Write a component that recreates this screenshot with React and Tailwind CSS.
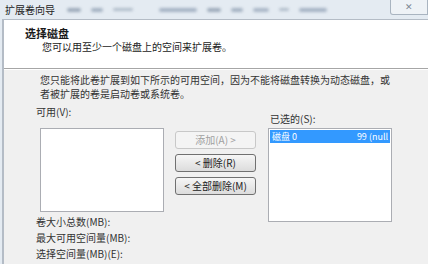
import React from "react";

const font = { fontFamily: '"Noto Sans CJK SC", "Noto Sans", sans-serif' };

function Btn({ children, disabled }) {
  return (
    <button
      className={`w-[81px] h-[18px] rounded-[3px] border text-[10px] leading-none flex items-center justify-center ${
        disabled
          ? "border-[#c8c8c8] bg-[#f4f4f4] text-[#a0a0a0]"
          : "border-[#707070] bg-gradient-to-b from-[#f6f6f6] to-[#dcdcdc] text-[#222]"
      }`}
    >
      {children}
    </button>
  );
}

export default function App() {
  return (
    <div className="w-[428px] h-[264px] overflow-hidden bg-[#e4ebf2] text-[#1a1a1a]" style={font}>
      {/* title bar */}
      <div className="h-[19px] flex items-center relative">
        <span className="pl-[5px] text-[10px] text-[#222]">扩展卷向导</span>
        <div className="flex items-center gap-[10px] ml-[12px] blur-[1.5px] opacity-70">
          <div className="w-[14px] h-[4px] bg-[#7f8fa3] rounded" />
          <div className="w-[12px] h-[4px] bg-[#8899ad] rounded" />
          <div className="w-[20px] h-[3px] bg-[#9aa8b8] rounded" />
          <div className="w-[38px] h-[4px] bg-[#8a9ab0] rounded ml-[16px]" />
          <div className="w-[14px] h-[4px] bg-[#7f8fa3] rounded" />
          <div className="w-[12px] h-[4px] bg-[#8899ad] rounded" />
          <div className="w-[16px] h-[4px] bg-[#90a0b4] rounded" />
          <div className="w-[10px] h-[3px] bg-[#9aa8b8] rounded" />
          <div className="w-[28px] h-[4px] bg-[#8a9ab0] rounded" />
        </div>
        <div className="absolute right-[0px] top-0 w-[38px] h-[15px] border border-[#a9b4c0] border-t-0 rounded-bl-[3px] bg-[#eef2f6] flex items-center justify-center text-[9px] text-[#7c8794]">
          ✕
        </div>
      </div>

      {/* window */}
      <div className="ml-[2px] border-l-2 border-t border-[#b4bcc6] h-[245px] flex flex-col">
        <div className="h-[49px] shrink-0 bg-white border-b border-[#a6a6a6] pl-[21px] pt-[6px]">
          <div className="text-[11px] font-bold leading-[14px]">选择磁盘</div>
          <div className="pl-[17px] text-[10px] leading-[13px] text-[#222]">您可以用至少一个磁盘上的空间来扩展卷。</div>
        </div>

        <div className="flex-1 bg-[#f0f0f0] border-t border-white pl-[32px] pt-[3px]">
          <div className="pl-[4px] text-[10px] leading-[14px] text-[#333] whitespace-nowrap">
            <div>您只能将此卷扩展到如下所示的可用空间，因为不能将磁盘转换为动态磁盘，或</div>
            <div>者被扩展的卷是启动卷或系统卷。</div>
          </div>

          <div className="flex items-start mt-[4px]">
            <div className="flex flex-col">
              <div className="text-[10px] leading-[14px] text-[#333]">可用(V):</div>
              <div className="ml-[4px] mt-[9px] w-[124px] h-[84px] bg-white border border-[#abadb3]" />
              <div className="mt-[2px] text-[10px] leading-[16px] text-[#333] whitespace-nowrap">
                <div>卷大小总数(MB):</div>
                <div>最大可用空间量(MB):</div>
                <div>选择空间量(MB)(E):</div>
              </div>
            </div>

            <div className="flex flex-col gap-[5px] ml-[11px] mt-[26px]">
              <Btn disabled>添加(A) &gt;</Btn>
              <Btn>&lt; 删除(R)</Btn>
              <Btn>&lt; 全部删除(M)</Btn>
            </div>

            <div className="flex flex-col ml-[12px] mt-[7px]">
              <div className="pl-[2px] text-[10px] leading-[14px] text-[#333]">已选的(S):</div>
              <div className="mt-[2px] w-[124px] h-[94px] bg-white border border-[#abadb3] p-[1px]">
                <div className="h-[13px] bg-[#3399ff] text-white text-[9px] leading-[13px] flex justify-between px-[2px]">
                  <span>磁盘 0</span>
                  <span>99 (null</span>
                </div>
              </div>
            </div>
          </div>
        </div>
      </div>
    </div>
  );
}
